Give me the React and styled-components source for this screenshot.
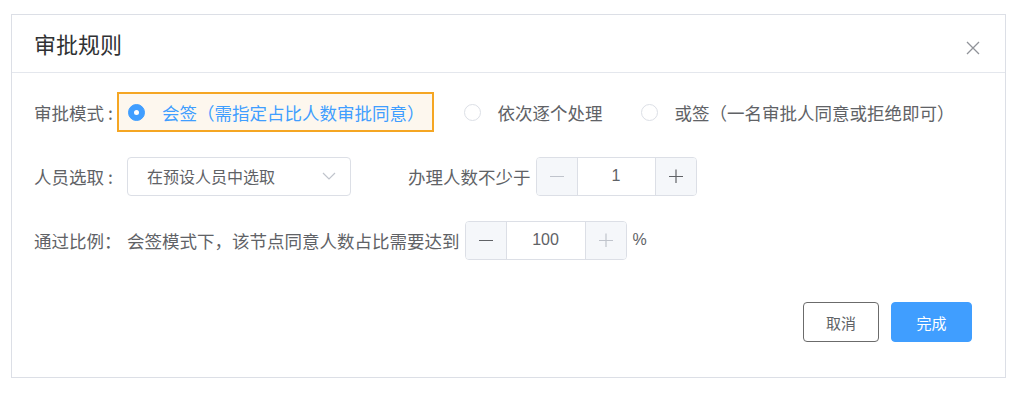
import React from 'react';
import styled, { createGlobalStyle } from 'styled-components';

const GlobalStyle = createGlobalStyle`
  html, body {
    margin: 0;
    padding: 0;
    background: #ffffff;
  }
  body {
    font-family: "Noto Sans CJK SC", "Noto Sans", sans-serif;
    color: #606266;
  }
`;

const Page = styled.div`
  width: 1020px;
  height: 395px;
  padding: 14px 0 0 11px;
  box-sizing: border-box;
`;

const Dialog = styled.div`
  width: 995px;
  height: 364px;
  box-sizing: border-box;
  border: 1px solid #dcdfe6;
  background: #ffffff;
  display: flex;
  flex-direction: column;
`;

const Header = styled.div`
  height: 58px;
  box-sizing: border-box;
  border-bottom: 1px solid #e4e7ed;
  display: flex;
  align-items: center;
  justify-content: space-between;
  padding: 0 24px 0 22px;
`;

const Title = styled.div`
  font-size: 22px;
  color: #303133;
  line-height: 1;
  margin-top: -1px;
`;

const CloseBtn = styled.div`
  width: 16px;
  height: 16px;
  margin-top: 8px;
  display: flex;
  align-items: center;
  justify-content: center;
`;

const Body = styled.div`
  flex: 1;
  display: flex;
  flex-direction: column;
  gap: 24px;
  padding: 19px 22px 0 22px;
`;

const Row = styled.div`
  height: 40px;
  display: flex;
  align-items: center;
  font-size: 17.5px;
  color: #606266;
  white-space: nowrap;
`;

const Label = styled.div`
  width: ${p => p.$w || 93}px;
  flex: none;
`;

const Highlight = styled.div`
  height: 40px;
  box-sizing: border-box;
  border: 2px solid #f5a623;
  background: #fdf7ee;
  display: flex;
  align-items: center;
  padding: 0 7px 0 9px;
  margin-left: -10px;
  margin-right: 30px;
`;

const Option = styled.label`
  display: flex;
  align-items: center;
  gap: 17px;
  margin-right: ${p => p.$mr || 0}px;
  color: ${p => (p.$active ? '#409eff' : '#606266')};
  cursor: pointer;
`;

const Circle = styled.span`
  width: 17px;
  height: 17px;
  box-sizing: border-box;
  border-radius: 50%;
  border: 1px solid ${p => (p.$active ? '#409eff' : '#dcdfe6')};
  background: ${p => (p.$active ? '#409eff' : '#ffffff')};
  display: flex;
  align-items: center;
  justify-content: center;

  &::after {
    content: '';
    width: 5px;
    height: 5px;
    border-radius: 50%;
    background: #ffffff;
    display: ${p => (p.$active ? 'block' : 'none')};
  }
`;

const Select = styled.div`
  width: 224px;
  height: 39px;
  box-sizing: border-box;
  border: 1px solid #dcdfe6;
  border-radius: 4px;
  display: flex;
  align-items: center;
  justify-content: space-between;
  padding: 0 14px 0 19px;
  font-size: 16px;
  color: #606266;
`;

const Spacer = styled.div`
  width: ${p => p.$w}px;
  flex: none;
`;

const Stepper = styled.div`
  width: ${p => p.$w}px;
  height: 39px;
  box-sizing: border-box;
  border: 1px solid #dcdfe6;
  border-radius: 4px;
  display: flex;
  overflow: hidden;
  margin-left: 5px;
`;

const StepBtn = styled.div`
  width: 40px;
  flex: none;
  background: #f5f7fa;
  display: flex;
  align-items: center;
  justify-content: center;
  border-left: ${p => (p.$side === 'right' ? '1px solid #dcdfe6' : 'none')};
  border-right: ${p => (p.$side === 'left' ? '1px solid #dcdfe6' : 'none')};
`;

const StepValue = styled.div`
  flex: 1;
  display: flex;
  align-items: center;
  justify-content: center;
  font-family: "Liberation Sans", Arial, sans-serif;
  font-size: 16px;
  color: #606266;
`;

const Unit = styled.span`
  margin-left: 6px;
  font-family: "Liberation Sans", Arial, sans-serif;
  font-size: 16px;
`;

const Footer = styled.div`
  display: flex;
  justify-content: flex-end;
  gap: 12px;
  padding: 0 33px 35px 0;
`;

const Button = styled.button`
  height: 40px;
  width: ${p => p.$w}px;
  box-sizing: border-box;
  border-radius: 4px;
  font-family: "Noto Sans CJK SC", sans-serif;
  font-size: 15px;
  cursor: pointer;
  border: 1px solid ${p => (p.$primary ? '#409eff' : '#6b6b6b')};
  background: ${p => (p.$primary ? '#409eff' : '#ffffff')};
  color: ${p => (p.$primary ? '#ffffff' : '#606266')};
`;

const Minus = ({ color }) => (
  <svg width="14" height="14" viewBox="0 0 14 14">
    <path d="M0 7.5h14" stroke={color} strokeWidth="1.2" />
  </svg>
);

const Plus = ({ color }) => (
  <svg width="14" height="14" viewBox="0 0 14 14">
    <path d="M0 7.5h14M7 0.5v14" stroke={color} strokeWidth="1.2" />
  </svg>
);

const NumberInput = ({ value, width, minDisabled, maxDisabled }) => (
  <Stepper $w={width}>
    <StepBtn $side="left">
      <Minus color={minDisabled ? '#c0c4cc' : '#606266'} />
    </StepBtn>
    <StepValue>{value}</StepValue>
    <StepBtn $side="right">
      <Plus color={maxDisabled ? '#c0c4cc' : '#606266'} />
    </StepBtn>
  </Stepper>
);

const App = () => {
  return (
    <>
      <GlobalStyle />
      <Page>
        <Dialog>
          <Header>
            <Title>审批规则</Title>
            <CloseBtn>
              <svg width="14" height="14" viewBox="0 0 14 14">
                <path d="M1 1L13 13M13 1L1 13" stroke="#909399" strokeWidth="1.3" />
              </svg>
            </CloseBtn>
          </Header>
          <Body>
            <Row>
              <Label $w={93}>审批模式 :</Label>
              <Highlight>
                <Option $active>
                  <Circle $active />
                  会签（需指定占比人数审批同意）
                </Option>
              </Highlight>
              <Option $mr={38}>
                <Circle />
                依次逐个处理
              </Option>
              <Option>
                <Circle />
                或签（一名审批人同意或拒绝即可）
              </Option>
            </Row>
            <Row>
              <Label>人员选取 :</Label>
              <Select>
                在预设人员中选取
                <svg width="14" height="8" viewBox="0 0 14 8">
                  <path d="M1 1l6 6 6-6" fill="none" stroke="#c0c4cc" strokeWidth="1.2" />
                </svg>
              </Select>
              <Spacer $w={57} />
              办理人数不少于
              <NumberInput value="1" width={161} minDisabled />
            </Row>
            <Row>
              <Label>通过比例：</Label>
              会签模式下，该节点同意人数占比需要达到
              <NumberInput value="100" width={162} maxDisabled />
              <Unit>%</Unit>
            </Row>
          </Body>
          <Footer>
            <Button $w={76}>取消</Button>
            <Button $w={81} $primary>完成</Button>
          </Footer>
        </Dialog>
      </Page>
    </>
  );
};

export default App;
